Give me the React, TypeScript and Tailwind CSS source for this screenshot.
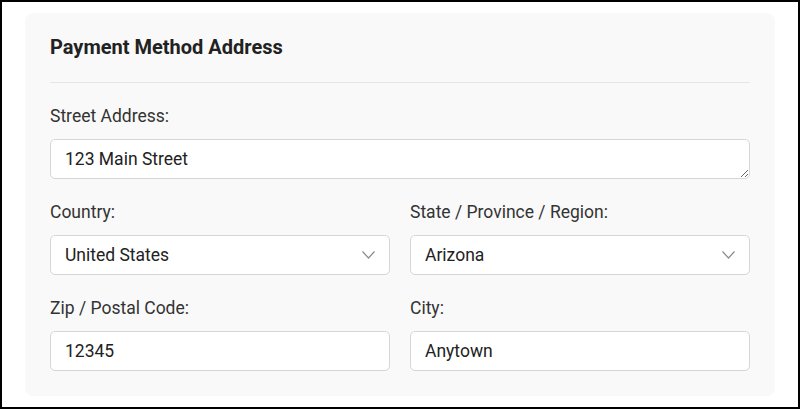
import React from "react";

function Chevron() {
  return (
    <svg
      className="pointer-events-none absolute right-[15px] top-1/2 -translate-y-1/2"
      width="13"
      height="8"
      viewBox="0 0 13 8"
      fill="none"
    >
      <path d="M0.5 0.5L6.5 7L12.5 0.5" stroke="#8a8a8a" strokeWidth="1.2" />
    </svg>
  );
}

function Label({ children }: { children: React.ReactNode }) {
  return <label className="mb-[11px] block text-[17.5px] leading-6 text-[#333333]">{children}</label>;
}

const control =
  "block h-10 w-full rounded-[5px] border border-[#d6d6d6] bg-white px-[14px] text-[17.5px] leading-6 text-[#222222] outline-none";

function SelectField({ label, value }: { label: string; value: string }) {
  return (
    <div>
      <Label>{label}</Label>
      <div className="relative">
        <select className={control + " appearance-none"} defaultValue={value}>
          <option>{value}</option>
        </select>
        <Chevron />
      </div>
    </div>
  );
}

function InputField({ label, value }: { label: string; value: string }) {
  return (
    <div>
      <Label>{label}</Label>
      <input className={control} defaultValue={value} />
    </div>
  );
}

export default function App() {
  return (
    <div
      className="h-[409px] w-[800px] border-2 border-black bg-white pl-[23px] pt-[11px]"
      style={{ fontFamily: "Roboto, 'Noto Sans', sans-serif" }}
    >
      <div className="w-[750px] rounded-lg bg-[#f9f9f9] px-[25px] pb-[25px] pt-5">
        <h2 className="border-b border-[#e6e6e6] pb-[21px] text-[20px] font-bold leading-7 text-[#222222]">
          Payment Method Address
        </h2>
        <div className="mt-[21px] flex flex-col gap-[21px]">
          <div>
            <Label>Street Address:</Label>
            <textarea
              className="block h-10 w-full resize-y rounded-[5px] border border-[#d6d6d6] bg-white px-[14px] py-[7px] text-[17.5px] leading-6 text-[#222222] outline-none"
              defaultValue="123 Main Street"
            />
          </div>
          <div className="grid grid-cols-2 gap-x-5">
            <SelectField label="Country:" value="United States" />
            <SelectField label="State / Province / Region:" value="Arizona" />
          </div>
          <div className="grid grid-cols-2 gap-x-5">
            <InputField label="Zip / Postal Code:" value="12345" />
            <InputField label="City:" value="Anytown" />
          </div>
        </div>
      </div>
    </div>
  );
}
